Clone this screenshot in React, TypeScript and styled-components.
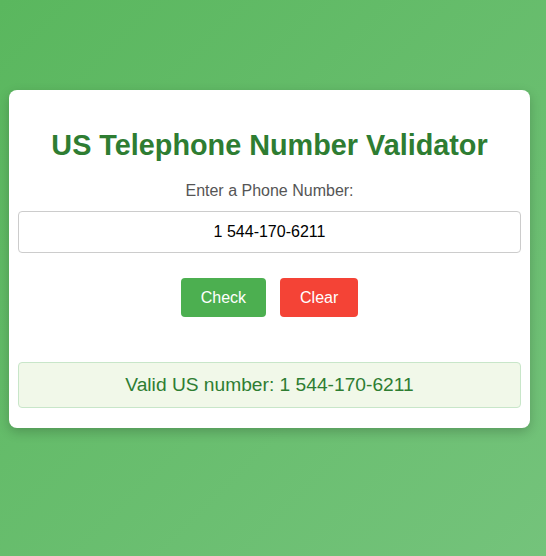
import React, { useState } from "react";
import styled, { createGlobalStyle } from "styled-components";

const GlobalStyle = createGlobalStyle`
  html, body {
    margin: 0;
    padding: 0;
  }
  body {
    font-family: Arial, "Liberation Sans", sans-serif;
    min-height: 100vh;
    background: linear-gradient(135deg, #5ab75e, #74c37b);
  }
`;

const Page = styled.div`
  min-height: 100vh;
  padding: 90px 16px 0 9px;
  box-sizing: border-box;
`;

const Card = styled.div`
  background: #fff;
  border-radius: 8px;
  padding: 20px 9px;
  text-align: center;
  box-shadow: 0 4px 12px rgba(0, 0, 0, 0.2);
`;

const Title = styled.h1`
  font-size: 28.8px;
  line-height: 33px;
  margin: 19px 0 20px;
  color: #2e7d32;
`;

const Label = styled.label`
  display: block;
  font-size: 16px;
  line-height: 18px;
  color: #555;
  margin-bottom: 11px;
`;

const Input = styled.input`
  display: block;
  width: 100%;
  height: 42px;
  box-sizing: border-box;
  border: 1px solid #ccc;
  border-radius: 4px;
  font-family: Arial, "Liberation Sans", sans-serif;
  font-size: 16px;
  text-align: center;
  color: #000;
  outline: none;
`;

const Buttons = styled.div`
  display: flex;
  justify-content: center;
  gap: 14px;
  margin: 25px 0 45px;
`;

const Button = styled.button<{ $tone: "green" | "red" }>`
  height: 39px;
  padding: 0 20px;
  border: none;
  border-radius: 4px;
  font-family: Arial, "Liberation Sans", sans-serif;
  font-size: 16px;
  color: #fff;
  cursor: pointer;
  background: ${(p) => (p.$tone === "green" ? "#4caf50" : "#f44336")};
`;

const Result = styled.div`
  height: 46px;
  box-sizing: border-box;
  display: flex;
  align-items: center;
  justify-content: center;
  background: #f1f8e9;
  border: 1px solid #c8e6c9;
  border-radius: 4px;
  color: #2e7d32;
  font-size: 19.2px;
`;

function App() {
  const [value, setValue] = useState("1 544-170-6211");
  const [result, setResult] = useState("Valid US number: 1 544-170-6211");

  const check = () => {
    const re = /^(1\s?)?(\(\d{3}\)|\d{3})[\s-]?\d{3}[\s-]?\d{4}$/;
    setResult(
      re.test(value) ? `Valid US number: ${value}` : `Invalid US number: ${value}`
    );
  };

  return (
    <>
      <GlobalStyle />
      <Page>
        <Card>
          <Title>US Telephone Number Validator</Title>
          <Label htmlFor="user-input">Enter a Phone Number:</Label>
          <Input
            id="user-input"
            value={value}
            onChange={(e) => setValue(e.target.value)}
          />
          <Buttons>
            <Button $tone="green" onClick={check}>
              Check
            </Button>
            <Button
              $tone="red"
              onClick={() => {
                setValue("");
                setResult("");
              }}
            >
              Clear
            </Button>
          </Buttons>
          <Result>{result}</Result>
        </Card>
      </Page>
    </>
  );
}

export default App;
